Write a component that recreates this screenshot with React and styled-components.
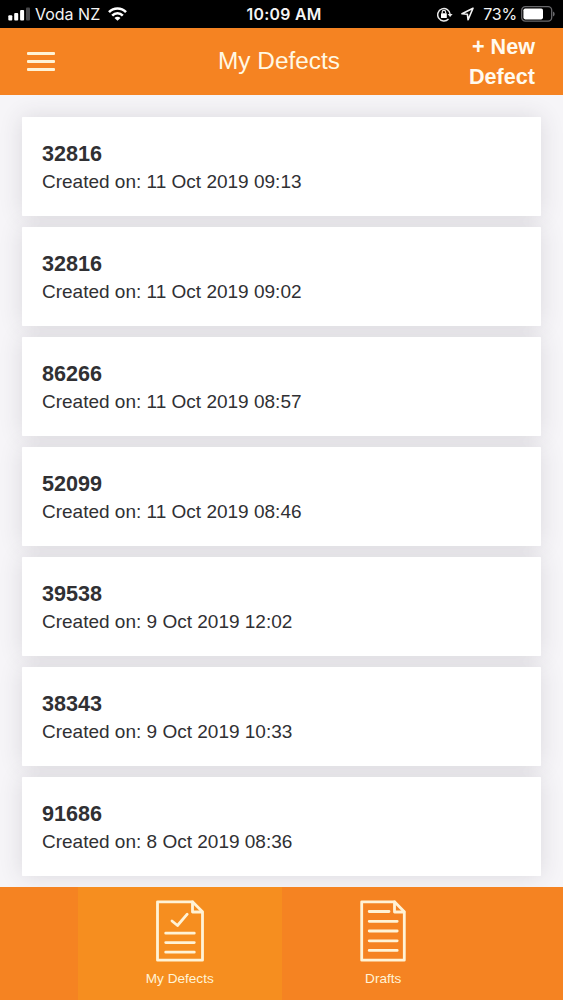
import React from 'react'
import styled, { createGlobalStyle } from 'styled-components'

const GlobalStyle = createGlobalStyle`
*{
    box-sizing: border-box;
}
body{
    margin: 0;
    background: #f6f5f8;
    font-family: "Liberation Sans", Arial, sans-serif;
}
`

const Screen = styled.div`
display: flex;
flex-direction: column;
width: 563px;
height: 1000px;
overflow: hidden;
background: #f6f5f8;
`

const StatusBar = styled.div`
display: grid;
grid-template-columns: 1fr auto 1fr;
align-items: center;
height: 28px;
flex-shrink: 0;
padding: 0 8px;
background: #000;
color: #f4f4f4;
font-family: Inter, "Liberation Sans", sans-serif;
font-size: 16px;
line-height: 28px;
`

const StatusGroup = styled.div`
display: flex;
align-items: center;
gap: ${({$gap})=>$gap || '0'};
justify-content: ${({$end})=>$end ? 'flex-end' : 'flex-start'};
svg{
    display: block;
    flex-shrink: 0;
}
`

const Carrier = styled.span`
margin: 0 8px 0 5px;
font-size: 16px;
letter-spacing: 0;
`

const Time = styled.span`
font-weight: 600;
font-size: 15.8px;
letter-spacing: 0.3px;
margin-left: 5px;
padding-top: 2px;
line-height: 26px;
`

const Percent = styled.span`
margin: 0 4px 0 9px;
font-size: 16px;
letter-spacing: -0.2px;
`

const Header = styled.header`
display: grid;
grid-template-columns: 116px 1fr 120px;
align-items: center;
height: 67px;
flex-shrink: 0;
padding: 0 28px 0 27px;
background: #f58322;
color: #fff8e4;
`

const MenuButton = styled.button`
display: flex;
flex-direction: column;
justify-content: space-between;
width: 28px;
height: 19px;
padding: 0;
border: none;
background: transparent;
span{
    height: 3px;
    border-radius: 1px;
    background: #fff3d6;
}
`

const Title = styled.h1`
margin: 0 0 2px;
text-align: center;
font-size: 24.4px;
font-weight: 400;
line-height: 30px;
`

const NewDefect = styled.button`
justify-self: end;
width: 80px;
padding: 1px 0 0;
border: none;
background: transparent;
color: #fffaf0;
font-family: inherit;
font-size: 21.6px;
font-weight: 700;
line-height: 30px;
text-align: right;
`

const List = styled.main`
flex: 1;
min-height: 0;
display: flex;
flex-direction: column;
gap: 11px;
padding: 22px 22px 0;
overflow: hidden;
isolation: isolate;
`

// the shadow sits on a layer below, so it never falls on the card above
const Card = styled.article`
position: relative;
height: 99px;
flex-shrink: 0;
padding: 23px 20px 0;
border-radius: 1px;
background: #fff;
color: #303033;
&::before{
    content: "";
    position: absolute;
    inset: 0;
    z-index: -1;
    box-shadow: 0 0 22px rgba(60, 48, 62, 0.14);
}
h2{
    margin: 0;
    font-size: 21.6px;
    font-weight: 700;
    line-height: 28px;
}
p{
    margin: 0;
    font-size: 19px;
    line-height: 28px;
}
`

const TabBar = styled.nav`
display: flex;
justify-content: center;
height: 113px;
flex-shrink: 0;
background: #f58322;
`

const Tab = styled.button`
display: flex;
flex-direction: column;
align-items: center;
width: 203.5px;
padding: 13px 0 0;
border: none;
background: ${({$active})=>$active ? '#f68e1f' : 'transparent'};
color: #fff3d6;
font-family: inherit;
font-size: 13.6px;
line-height: 16px;
svg{
    display: block;
    margin-bottom: 9px;
}
`

const SignalIcon = () => (
  <svg width="22" height="14" viewBox="0 0 22 14" fill="#fff">
    <rect x="0.3" y="8.3" width="4" height="5.2" rx="1" />
    <rect x="6.2" y="6" width="4" height="7.5" rx="1" />
    <rect x="12.1" y="3" width="4" height="10.5" rx="1" />
    <rect x="18" y="0.5" width="4" height="13" rx="1" fill="#48484a" />
  </svg>
)

const WifiIcon = () => (
  <svg width="19" height="14" viewBox="0 0 19 14" fill="none" stroke="#fff" strokeWidth="2.6">
    <path d="M1 5.2C5.8 0.3 13.2 0.3 18 5.2" />
    <path d="M4.2 8.6C7.2 5.5 11.8 5.5 14.8 8.6" />
    <path d="M9.5 13.8L6.5 10.9C8.1 9.4 10.9 9.4 12.5 10.9Z" fill="#fff" stroke="none" />
  </svg>
)

const RotationLockIcon = () => (
  <svg width="16" height="15" viewBox="0 0 16 15" fill="none" stroke="#e8e8e8" strokeWidth="1.5">
    <path d="M11.5 11.9A6.2 6.2 0 1 1 13.1 7.3" />
    <path d="M10.6 6.9H15.6L13.1 10Z" fill="#e8e8e8" stroke="none" />
    <rect x="4" y="6.3" width="5.8" height="4.6" rx="0.5" fill="#fff" stroke="none" />
    <path d="M5.2 6.6V5.1A1.7 1.7 0 0 1 8.6 5.1V6.6" strokeWidth="1.2" />
  </svg>
)

const LocationIcon = () => (
  <svg width="13" height="14" viewBox="0 0 13 14" fill="none" stroke="#f4f4f4" strokeWidth="1.6" strokeLinejoin="round">
    <path d="M12 1.2L1 6.8L6.4 7.3L7.1 12.8Z" />
  </svg>
)

const BatteryIcon = () => (
  <svg width="34" height="16" viewBox="0 0 34 16">
    <rect x="0.7" y="0.7" width="30" height="14.4" rx="3.6" fill="none" stroke="#68686b" strokeWidth="1.3" />
    <rect x="2.4" y="2.4" width="19.6" height="11" rx="1.8" fill="#fff" />
    <path d="M32 5.4C34.2 6.3 34.2 9.5 32 10.4Z" fill="#68686b" />
  </svg>
)

const DefectsIcon = () => (
  <svg width="48" height="62" viewBox="0 0 48 62" fill="none" stroke="#fff3d6" strokeWidth="2.8" strokeLinecap="round" strokeLinejoin="round">
    <path d="M1.5 1.8H36.5L46.5 11.8V60.2H1.5Z" />
    <path d="M36.5 2V12H46" />
    <path d="M16 21L21.5 25.5L31.2 14.2" />
    <path d="M9.7 33.2H38.3M9.7 42.6H38.3M9.7 52.2H38.3" />
  </svg>
)

const DraftsIcon = () => (
  <svg width="46" height="62" viewBox="0 0 46 62" fill="none" stroke="#fff3d6" strokeWidth="2.8" strokeLinecap="round" strokeLinejoin="round">
    <path d="M1.7 1.8H34.5L44.3 11.8V60.2H1.7Z" />
    <path d="M34.5 2V12H44" />
    <path d="M9.2 11.5H29M9.2 21.3H37.2M9.2 31H37.2M9.2 40.8H37.2M9.2 50.4H37.2" />
  </svg>
)

const defects = [
  { number: '32816', created: '11 Oct 2019 09:13' },
  { number: '32816', created: '11 Oct 2019 09:02' },
  { number: '86266', created: '11 Oct 2019 08:57' },
  { number: '52099', created: '11 Oct 2019 08:46' },
  { number: '39538', created: '9 Oct 2019 12:02' },
  { number: '38343', created: '9 Oct 2019 10:33' },
  { number: '91686', created: '8 Oct 2019 08:36' },
]

const App = () => {
  return (
    <>
      <GlobalStyle />
      <Screen>
        <StatusBar>
          <StatusGroup>
            <SignalIcon />
            <Carrier>Voda NZ</Carrier>
            <WifiIcon />
          </StatusGroup>
          <Time>10:09 AM</Time>
          <StatusGroup $end>
            <StatusGroup $gap="8px">
              <RotationLockIcon />
              <LocationIcon />
            </StatusGroup>
            <Percent>73%</Percent>
            <BatteryIcon />
          </StatusGroup>
        </StatusBar>
        <Header>
          <MenuButton aria-label="Menu">
            <span />
            <span />
            <span />
          </MenuButton>
          <Title>My Defects</Title>
          <NewDefect>+ New Defect</NewDefect>
        </Header>
        <List>
          {defects.map((defect,index)=>(
            <Card key={index}>
              <h2>{defect.number}</h2>
              <p>Created on: {defect.created}</p>
            </Card>
          ))}
        </List>
        <TabBar>
          <Tab $active>
            <DefectsIcon />
            My Defects
          </Tab>
          <Tab>
            <DraftsIcon />
            Drafts
          </Tab>
        </TabBar>
      </Screen>
    </>
  )
}

export default App
